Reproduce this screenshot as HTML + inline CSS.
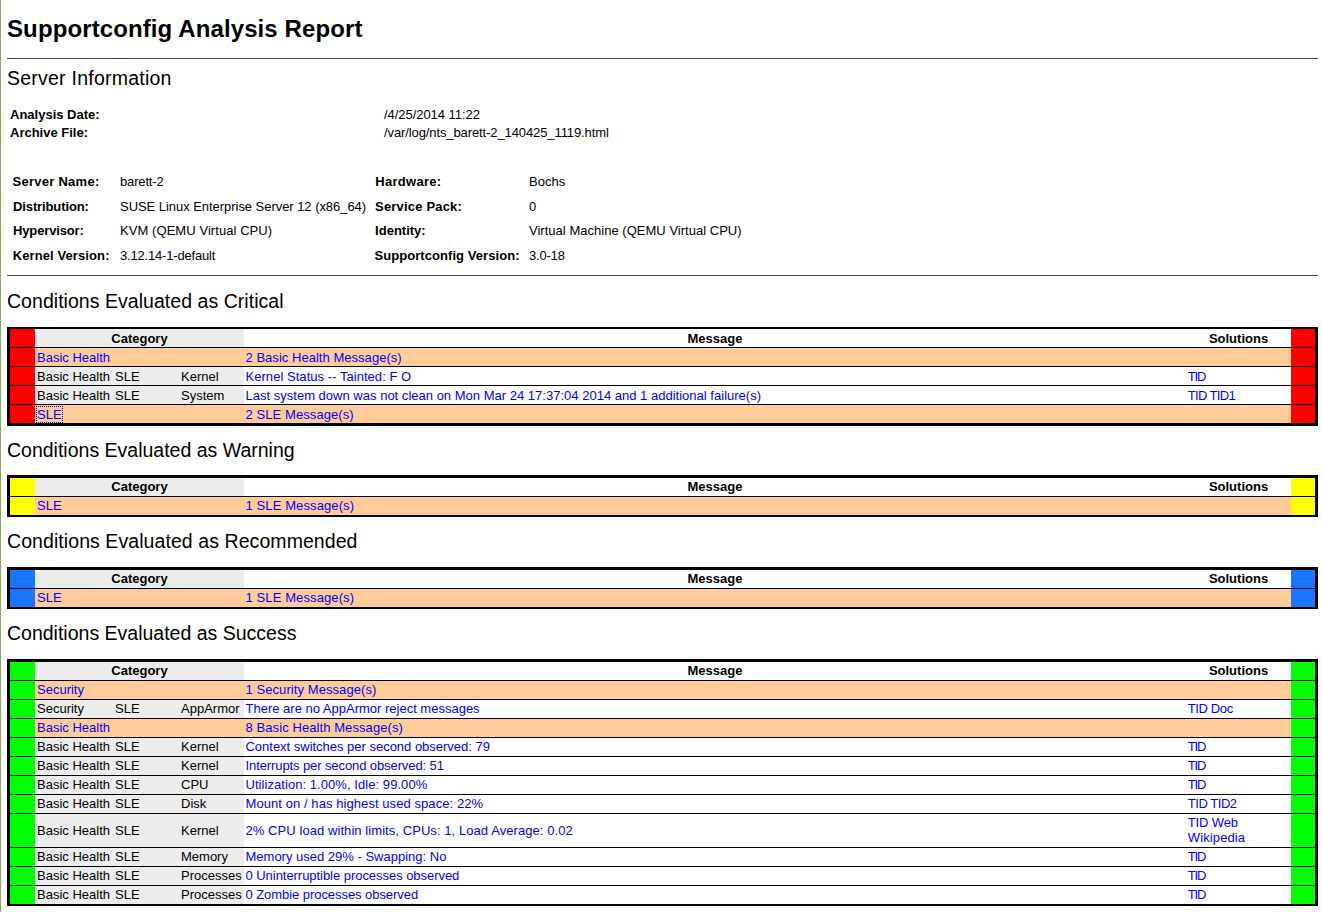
<!DOCTYPE html>
<html><head><meta charset="utf-8"><title>Supportconfig Analysis Report</title>
<style>
html,body{margin:0;padding:0;background:#fff;width:1322px;height:912px;overflow:hidden;}
body{position:relative;font-family:"Liberation Sans",sans-serif;font-size:13px;color:#000;}
.t{position:absolute;white-space:nowrap;}
.c{text-align:center;line-height:15px;font-size:13px;}
.b{position:absolute;}
h1,h2{margin:0;padding:0;font-weight:normal;}
a{text-decoration:none;}
</style></head><body>
<div class="b" style="left:0px;top:0px;width:1px;height:912px;background:#86a956;"></div>
<h1 class="t" style="left:7px;top:14.68px;font-size:24px;line-height:28px;font-weight:bold;color:#000;letter-spacing:0.107px;">Supportconfig Analysis Report</h1>
<div class="b" style="left:7px;top:58px;width:1311px;height:1px;background:#444;"></div>
<h2 class="t" style="left:7px;top:67.24px;font-size:19.5px;line-height:22px;color:#000;letter-spacing:0.235px;">Server Information</h2>
<div class="t" style="left:10px;top:107.00px;font-size:13px;line-height:15px;font-weight:bold;color:#000;">Analysis Date:</div>
<div class="t" style="left:384px;top:107.00px;font-size:13px;line-height:15px;color:#000;letter-spacing:-0.050px;">/4/25/2014 11:22</div>
<div class="t" style="left:10px;top:125.00px;font-size:13px;line-height:15px;font-weight:bold;color:#000;">Archive File:</div>
<div class="t" style="left:384px;top:125.00px;font-size:13px;line-height:15px;color:#000;letter-spacing:-0.103px;">/var/log/nts_barett-2_140425_1119.html</div>
<div class="t" style="left:12.5px;top:174.00px;font-size:13px;line-height:15px;font-weight:bold;color:#000;letter-spacing:0.264px;">Server Name:</div>
<div class="t" style="left:120px;top:174.00px;font-size:13px;line-height:15px;color:#000;letter-spacing:-0.157px;">barett-2</div>
<div class="t" style="left:375.3px;top:174.00px;font-size:13px;line-height:15px;font-weight:bold;color:#000;letter-spacing:0.287px;">Hardware:</div>
<div class="t" style="left:529px;top:174.00px;font-size:13px;line-height:15px;color:#000;">Bochs</div>
<div class="t" style="left:13px;top:199.00px;font-size:13px;line-height:15px;font-weight:bold;color:#000;letter-spacing:-0.117px;">Distribution:</div>
<div class="t" style="left:120px;top:199.00px;font-size:13px;line-height:15px;color:#000;letter-spacing:-0.044px;">SUSE Linux Enterprise Server 12 (x86_64)</div>
<div class="t" style="left:375.1px;top:199.00px;font-size:13px;line-height:15px;font-weight:bold;color:#000;letter-spacing:0.183px;">Service Pack:</div>
<div class="t" style="left:529px;top:199.00px;font-size:13px;line-height:15px;color:#000;">0</div>
<div class="t" style="left:13px;top:223.00px;font-size:13px;line-height:15px;font-weight:bold;color:#000;letter-spacing:-0.140px;">Hypervisor:</div>
<div class="t" style="left:120px;top:223.00px;font-size:13px;line-height:15px;color:#000;letter-spacing:0.067px;">KVM (QEMU Virtual CPU)</div>
<div class="t" style="left:375.1px;top:223.00px;font-size:13px;line-height:15px;font-weight:bold;color:#000;">Identity:</div>
<div class="t" style="left:529px;top:223.00px;font-size:13px;line-height:15px;color:#000;letter-spacing:0.021px;">Virtual Machine (QEMU Virtual CPU)</div>
<div class="t" style="left:12.7px;top:248.00px;font-size:13px;line-height:15px;font-weight:bold;color:#000;letter-spacing:0.100px;">Kernel Version:</div>
<div class="t" style="left:120px;top:248.00px;font-size:13px;line-height:15px;color:#000;letter-spacing:-0.181px;">3.12.14-1-default</div>
<div class="t" style="left:374.5px;top:248.00px;font-size:13px;line-height:15px;font-weight:bold;color:#000;letter-spacing:0.062px;">Supportconfig Version:</div>
<div class="t" style="left:529px;top:248.00px;font-size:13px;line-height:15px;color:#000;letter-spacing:-0.200px;">3.0-18</div>
<div class="b" style="left:7px;top:275px;width:1311px;height:1px;background:#444;"></div>
<h2 class="t" style="left:7px;top:290.24px;font-size:19.5px;line-height:22px;color:#000;letter-spacing:0.039px;">Conditions Evaluated as Critical</h2>
<div class="b" style="left:7px;top:327px;width:1311px;height:99px;background:#000;"></div>
<div class="b" style="left:10px;top:329px;width:25px;height:18px;background:#ff0000;"></div>
<div class="b" style="left:1291px;top:329px;width:24px;height:18px;background:#ff0000;"></div>
<div class="b" style="left:35px;top:329px;width:209px;height:18px;background:#ececec;"></div>
<div class="b" style="left:244px;top:329px;width:1047px;height:18px;background:#fff;"></div>
<div class="t c" style="left:35px;width:209px;top:331px;font-weight:bold">Category</div>
<div class="t c" style="left:244px;width:942px;top:331px;font-weight:bold">Message</div>
<div class="t c" style="left:1186px;width:105px;top:331px;font-weight:bold">Solutions</div>
<div class="b" style="left:10px;top:348px;width:25px;height:18px;background:#ff0000;"></div>
<div class="b" style="left:1291px;top:348px;width:24px;height:18px;background:#ff0000;"></div>
<div class="b" style="left:35px;top:348px;width:1256px;height:18px;background:#ffcc99;"></div>
<a class="t" style="left:37px;top:350.00px;font-size:13px;line-height:15px;color:#0000ff;">Basic Health</a>
<a class="t" style="left:245.5px;top:350.00px;font-size:13px;line-height:15px;color:#0000ff;letter-spacing:0.033px;">2 Basic Health Message(s)</a>
<div class="b" style="left:10px;top:367px;width:25px;height:18px;background:#ff0000;"></div>
<div class="b" style="left:1291px;top:367px;width:24px;height:18px;background:#ff0000;"></div>
<div class="b" style="left:35px;top:367px;width:209px;height:18px;background:#ececec;"></div>
<div class="b" style="left:244px;top:367px;width:1047px;height:18px;background:#fff;"></div>
<div class="t" style="left:37px;top:369.00px;font-size:13px;line-height:15px;color:#000;">Basic Health</div>
<div class="t" style="left:115px;top:369.00px;font-size:13px;line-height:15px;color:#000;">SLE</div>
<div class="t" style="left:181px;top:369.00px;font-size:13px;line-height:15px;color:#000;">Kernel</div>
<a class="t" style="left:245.5px;top:369.00px;font-size:13px;line-height:15px;color:#0000ff;letter-spacing:0.043px;">Kernel Status -- Tainted: F O</a>
<a class="t" style="left:1187.8px;top:369.00px;font-size:13px;line-height:15px;color:#0000ff;letter-spacing:-1.150px;">TID</a>
<div class="b" style="left:10px;top:386px;width:25px;height:18px;background:#ff0000;"></div>
<div class="b" style="left:1291px;top:386px;width:24px;height:18px;background:#ff0000;"></div>
<div class="b" style="left:35px;top:386px;width:209px;height:18px;background:#ececec;"></div>
<div class="b" style="left:244px;top:386px;width:1047px;height:18px;background:#fff;"></div>
<div class="t" style="left:37px;top:388.00px;font-size:13px;line-height:15px;color:#000;">Basic Health</div>
<div class="t" style="left:115px;top:388.00px;font-size:13px;line-height:15px;color:#000;">SLE</div>
<div class="t" style="left:181px;top:388.00px;font-size:13px;line-height:15px;color:#000;">System</div>
<a class="t" style="left:245.5px;top:388.00px;font-size:13px;line-height:15px;color:#0000ff;letter-spacing:0.012px;">Last system down was not clean on Mon Mar 24 17:37:04 2014 and 1 additional failure(s)</a>
<a class="t" style="left:1187.8px;top:388.00px;font-size:13px;line-height:15px;color:#0000ff;letter-spacing:-0.643px;">TID TID1</a>
<div class="b" style="left:10px;top:405px;width:25px;height:18px;background:#ff0000;"></div>
<div class="b" style="left:1291px;top:405px;width:24px;height:18px;background:#ff0000;"></div>
<div class="b" style="left:35px;top:405px;width:1256px;height:18px;background:#ffcc99;"></div>
<a class="t" style="left:37px;top:407.00px;font-size:13px;line-height:15px;color:#0000ff;">SLE</a>
<a class="t" style="left:245.5px;top:407.00px;font-size:13px;line-height:15px;color:#0000ff;letter-spacing:0.080px;">2 SLE Message(s)</a>
<h2 class="t" style="left:7px;top:439.24px;font-size:19.5px;line-height:22px;color:#000;">Conditions Evaluated as Warning</h2>
<div class="b" style="left:7px;top:475px;width:1311px;height:42px;background:#000;"></div>
<div class="b" style="left:10px;top:478px;width:25px;height:18px;background:#ffff00;"></div>
<div class="b" style="left:1291px;top:478px;width:24px;height:18px;background:#ffff00;"></div>
<div class="b" style="left:35px;top:478px;width:209px;height:18px;background:#ececec;"></div>
<div class="b" style="left:244px;top:478px;width:1047px;height:18px;background:#fff;"></div>
<div class="t c" style="left:35px;width:209px;top:479px;font-weight:bold">Category</div>
<div class="t c" style="left:244px;width:942px;top:479px;font-weight:bold">Message</div>
<div class="t c" style="left:1186px;width:105px;top:479px;font-weight:bold">Solutions</div>
<div class="b" style="left:10px;top:497px;width:25px;height:18px;background:#ffff00;"></div>
<div class="b" style="left:1291px;top:497px;width:24px;height:18px;background:#ffff00;"></div>
<div class="b" style="left:35px;top:497px;width:1256px;height:18px;background:#ffcc99;"></div>
<a class="t" style="left:37px;top:498.00px;font-size:13px;line-height:15px;color:#0000ff;">SLE</a>
<a class="t" style="left:245.5px;top:498.00px;font-size:13px;line-height:15px;color:#0000ff;letter-spacing:0.107px;">1 SLE Message(s)</a>
<h2 class="t" style="left:7px;top:530.24px;font-size:19.5px;line-height:22px;color:#000;letter-spacing:0.074px;">Conditions Evaluated as Recommended</h2>
<div class="b" style="left:7px;top:567px;width:1311px;height:42px;background:#000;"></div>
<div class="b" style="left:10px;top:570px;width:25px;height:18px;background:#1a75ff;"></div>
<div class="b" style="left:1291px;top:570px;width:24px;height:18px;background:#1a75ff;"></div>
<div class="b" style="left:35px;top:570px;width:209px;height:18px;background:#ececec;"></div>
<div class="b" style="left:244px;top:570px;width:1047px;height:18px;background:#fff;"></div>
<div class="t c" style="left:35px;width:209px;top:571px;font-weight:bold">Category</div>
<div class="t c" style="left:244px;width:942px;top:571px;font-weight:bold">Message</div>
<div class="t c" style="left:1186px;width:105px;top:571px;font-weight:bold">Solutions</div>
<div class="b" style="left:10px;top:589px;width:25px;height:18px;background:#1a75ff;"></div>
<div class="b" style="left:1291px;top:589px;width:24px;height:18px;background:#1a75ff;"></div>
<div class="b" style="left:35px;top:589px;width:1256px;height:18px;background:#ffcc99;"></div>
<a class="t" style="left:37px;top:590.00px;font-size:13px;line-height:15px;color:#0000ff;">SLE</a>
<a class="t" style="left:245.5px;top:590.00px;font-size:13px;line-height:15px;color:#0000ff;letter-spacing:0.107px;">1 SLE Message(s)</a>
<h2 class="t" style="left:7px;top:622.24px;font-size:19.5px;line-height:22px;color:#000;">Conditions Evaluated as Success</h2>
<div class="b" style="left:7px;top:659px;width:1311px;height:247px;background:#000;"></div>
<div class="b" style="left:10px;top:662px;width:25px;height:18px;background:#00ff00;"></div>
<div class="b" style="left:1291px;top:662px;width:24px;height:18px;background:#00ff00;"></div>
<div class="b" style="left:35px;top:662px;width:209px;height:18px;background:#ececec;"></div>
<div class="b" style="left:244px;top:662px;width:1047px;height:18px;background:#fff;"></div>
<div class="t c" style="left:35px;width:209px;top:663px;font-weight:bold">Category</div>
<div class="t c" style="left:244px;width:942px;top:663px;font-weight:bold">Message</div>
<div class="t c" style="left:1186px;width:105px;top:663px;font-weight:bold">Solutions</div>
<div class="b" style="left:10px;top:681px;width:25px;height:18px;background:#00ff00;"></div>
<div class="b" style="left:1291px;top:681px;width:24px;height:18px;background:#00ff00;"></div>
<div class="b" style="left:35px;top:681px;width:1256px;height:18px;background:#ffcc99;"></div>
<a class="t" style="left:37px;top:682.00px;font-size:13px;line-height:15px;color:#0000ff;">Security</a>
<a class="t" style="left:245.5px;top:682.00px;font-size:13px;line-height:15px;color:#0000ff;letter-spacing:0.075px;">1 Security Message(s)</a>
<div class="b" style="left:10px;top:700px;width:25px;height:18px;background:#00ff00;"></div>
<div class="b" style="left:1291px;top:700px;width:24px;height:18px;background:#00ff00;"></div>
<div class="b" style="left:35px;top:700px;width:209px;height:18px;background:#ececec;"></div>
<div class="b" style="left:244px;top:700px;width:1047px;height:18px;background:#fff;"></div>
<div class="t" style="left:37px;top:701.00px;font-size:13px;line-height:15px;color:#000;">Security</div>
<div class="t" style="left:115px;top:701.00px;font-size:13px;line-height:15px;color:#000;">SLE</div>
<div class="t" style="left:181px;top:701.00px;font-size:13px;line-height:15px;color:#000;">AppArmor</div>
<a class="t" style="left:245.5px;top:701.00px;font-size:13px;line-height:15px;color:#0000ff;">There are no AppArmor reject messages</a>
<a class="t" style="left:1187.8px;top:701.00px;font-size:13px;line-height:15px;color:#0000ff;letter-spacing:-0.383px;">TID Doc</a>
<div class="b" style="left:10px;top:719px;width:25px;height:18px;background:#00ff00;"></div>
<div class="b" style="left:1291px;top:719px;width:24px;height:18px;background:#00ff00;"></div>
<div class="b" style="left:35px;top:719px;width:1256px;height:18px;background:#ffcc99;"></div>
<a class="t" style="left:37px;top:720.00px;font-size:13px;line-height:15px;color:#0000ff;">Basic Health</a>
<a class="t" style="left:245.5px;top:720.00px;font-size:13px;line-height:15px;color:#0000ff;letter-spacing:0.083px;">8 Basic Health Message(s)</a>
<div class="b" style="left:10px;top:738px;width:25px;height:18px;background:#00ff00;"></div>
<div class="b" style="left:1291px;top:738px;width:24px;height:18px;background:#00ff00;"></div>
<div class="b" style="left:35px;top:738px;width:209px;height:18px;background:#ececec;"></div>
<div class="b" style="left:244px;top:738px;width:1047px;height:18px;background:#fff;"></div>
<div class="t" style="left:37px;top:739.00px;font-size:13px;line-height:15px;color:#000;">Basic Health</div>
<div class="t" style="left:115px;top:739.00px;font-size:13px;line-height:15px;color:#000;">SLE</div>
<div class="t" style="left:181px;top:739.00px;font-size:13px;line-height:15px;color:#000;">Kernel</div>
<a class="t" style="left:245.5px;top:739.00px;font-size:13px;line-height:15px;color:#0000ff;letter-spacing:-0.015px;">Context switches per second observed: 79</a>
<a class="t" style="left:1187.8px;top:739.00px;font-size:13px;line-height:15px;color:#0000ff;letter-spacing:-1.150px;">TID</a>
<div class="b" style="left:10px;top:757px;width:25px;height:18px;background:#00ff00;"></div>
<div class="b" style="left:1291px;top:757px;width:24px;height:18px;background:#00ff00;"></div>
<div class="b" style="left:35px;top:757px;width:209px;height:18px;background:#ececec;"></div>
<div class="b" style="left:244px;top:757px;width:1047px;height:18px;background:#fff;"></div>
<div class="t" style="left:37px;top:758.00px;font-size:13px;line-height:15px;color:#000;">Basic Health</div>
<div class="t" style="left:115px;top:758.00px;font-size:13px;line-height:15px;color:#000;">SLE</div>
<div class="t" style="left:181px;top:758.00px;font-size:13px;line-height:15px;color:#000;">Kernel</div>
<a class="t" style="left:245.5px;top:758.00px;font-size:13px;line-height:15px;color:#0000ff;letter-spacing:-0.097px;">Interrupts per second observed: 51</a>
<a class="t" style="left:1187.8px;top:758.00px;font-size:13px;line-height:15px;color:#0000ff;letter-spacing:-1.150px;">TID</a>
<div class="b" style="left:10px;top:776px;width:25px;height:18px;background:#00ff00;"></div>
<div class="b" style="left:1291px;top:776px;width:24px;height:18px;background:#00ff00;"></div>
<div class="b" style="left:35px;top:776px;width:209px;height:18px;background:#ececec;"></div>
<div class="b" style="left:244px;top:776px;width:1047px;height:18px;background:#fff;"></div>
<div class="t" style="left:37px;top:777.00px;font-size:13px;line-height:15px;color:#000;">Basic Health</div>
<div class="t" style="left:115px;top:777.00px;font-size:13px;line-height:15px;color:#000;">SLE</div>
<div class="t" style="left:181px;top:777.00px;font-size:13px;line-height:15px;color:#000;">CPU</div>
<a class="t" style="left:245.5px;top:777.00px;font-size:13px;line-height:15px;color:#0000ff;letter-spacing:0.058px;">Utilization: 1.00%, Idle: 99.00%</a>
<a class="t" style="left:1187.8px;top:777.00px;font-size:13px;line-height:15px;color:#0000ff;letter-spacing:-1.150px;">TID</a>
<div class="b" style="left:10px;top:795px;width:25px;height:18px;background:#00ff00;"></div>
<div class="b" style="left:1291px;top:795px;width:24px;height:18px;background:#00ff00;"></div>
<div class="b" style="left:35px;top:795px;width:209px;height:18px;background:#ececec;"></div>
<div class="b" style="left:244px;top:795px;width:1047px;height:18px;background:#fff;"></div>
<div class="t" style="left:37px;top:796.00px;font-size:13px;line-height:15px;color:#000;">Basic Health</div>
<div class="t" style="left:115px;top:796.00px;font-size:13px;line-height:15px;color:#000;">SLE</div>
<div class="t" style="left:181px;top:796.00px;font-size:13px;line-height:15px;color:#000;">Disk</div>
<a class="t" style="left:245.5px;top:796.00px;font-size:13px;line-height:15px;color:#0000ff;letter-spacing:0.073px;">Mount on / has highest used space: 22%</a>
<a class="t" style="left:1187.8px;top:796.00px;font-size:13px;line-height:15px;color:#0000ff;letter-spacing:-0.457px;">TID TID2</a>
<div class="b" style="left:10px;top:814px;width:25px;height:33px;background:#00ff00;"></div>
<div class="b" style="left:1291px;top:814px;width:24px;height:33px;background:#00ff00;"></div>
<div class="b" style="left:35px;top:814px;width:209px;height:33px;background:#ececec;"></div>
<div class="b" style="left:244px;top:814px;width:1047px;height:33px;background:#fff;"></div>
<div class="t" style="left:37px;top:823.00px;font-size:13px;line-height:15px;color:#000;">Basic Health</div>
<div class="t" style="left:115px;top:823.00px;font-size:13px;line-height:15px;color:#000;">SLE</div>
<div class="t" style="left:181px;top:823.00px;font-size:13px;line-height:15px;color:#000;">Kernel</div>
<a class="t" style="left:245.5px;top:823.00px;font-size:13px;line-height:15px;color:#0000ff;letter-spacing:0.070px;">2% CPU load within limits, CPUs: 1, Load Average: 0.02</a>
<a class="t" style="left:1187.8px;top:815.00px;font-size:13px;line-height:15px;color:#0000ff;letter-spacing:-0.150px;">TID Web</a>
<a class="t" style="left:1187.8px;top:830.00px;font-size:13px;line-height:15px;color:#0000ff;letter-spacing:0.113px;">Wikipedia</a>
<div class="b" style="left:10px;top:848px;width:25px;height:18px;background:#00ff00;"></div>
<div class="b" style="left:1291px;top:848px;width:24px;height:18px;background:#00ff00;"></div>
<div class="b" style="left:35px;top:848px;width:209px;height:18px;background:#ececec;"></div>
<div class="b" style="left:244px;top:848px;width:1047px;height:18px;background:#fff;"></div>
<div class="t" style="left:37px;top:849.00px;font-size:13px;line-height:15px;color:#000;">Basic Health</div>
<div class="t" style="left:115px;top:849.00px;font-size:13px;line-height:15px;color:#000;">SLE</div>
<div class="t" style="left:181px;top:849.00px;font-size:13px;line-height:15px;color:#000;">Memory</div>
<a class="t" style="left:245.5px;top:849.00px;font-size:13px;line-height:15px;color:#0000ff;">Memory used 29% - Swapping: No</a>
<a class="t" style="left:1187.8px;top:849.00px;font-size:13px;line-height:15px;color:#0000ff;letter-spacing:-1.150px;">TID</a>
<div class="b" style="left:10px;top:867px;width:25px;height:18px;background:#00ff00;"></div>
<div class="b" style="left:1291px;top:867px;width:24px;height:18px;background:#00ff00;"></div>
<div class="b" style="left:35px;top:867px;width:209px;height:18px;background:#ececec;"></div>
<div class="b" style="left:244px;top:867px;width:1047px;height:18px;background:#fff;"></div>
<div class="t" style="left:37px;top:868.00px;font-size:13px;line-height:15px;color:#000;">Basic Health</div>
<div class="t" style="left:115px;top:868.00px;font-size:13px;line-height:15px;color:#000;">SLE</div>
<div class="t" style="left:181px;top:868.00px;font-size:13px;line-height:15px;color:#000;">Processes</div>
<a class="t" style="left:245.5px;top:868.00px;font-size:13px;line-height:15px;color:#0000ff;letter-spacing:-0.043px;">0 Uninterruptible processes observed</a>
<a class="t" style="left:1187.8px;top:868.00px;font-size:13px;line-height:15px;color:#0000ff;letter-spacing:-1.150px;">TID</a>
<div class="b" style="left:10px;top:886px;width:25px;height:18px;background:#00ff00;"></div>
<div class="b" style="left:1291px;top:886px;width:24px;height:18px;background:#00ff00;"></div>
<div class="b" style="left:35px;top:886px;width:209px;height:18px;background:#ececec;"></div>
<div class="b" style="left:244px;top:886px;width:1047px;height:18px;background:#fff;"></div>
<div class="t" style="left:37px;top:887.00px;font-size:13px;line-height:15px;color:#000;">Basic Health</div>
<div class="t" style="left:115px;top:887.00px;font-size:13px;line-height:15px;color:#000;">SLE</div>
<div class="t" style="left:181px;top:887.00px;font-size:13px;line-height:15px;color:#000;">Processes</div>
<a class="t" style="left:245.5px;top:887.00px;font-size:13px;line-height:15px;color:#0000ff;letter-spacing:-0.058px;">0 Zombie processes observed</a>
<a class="t" style="left:1187.8px;top:887.00px;font-size:13px;line-height:15px;color:#0000ff;letter-spacing:-1.150px;">TID</a>
<div class="b" style="left:36px;top:406px;width:25px;height:15px;background:transparent;border:1px dotted #0000ff;"></div>
</body></html>
